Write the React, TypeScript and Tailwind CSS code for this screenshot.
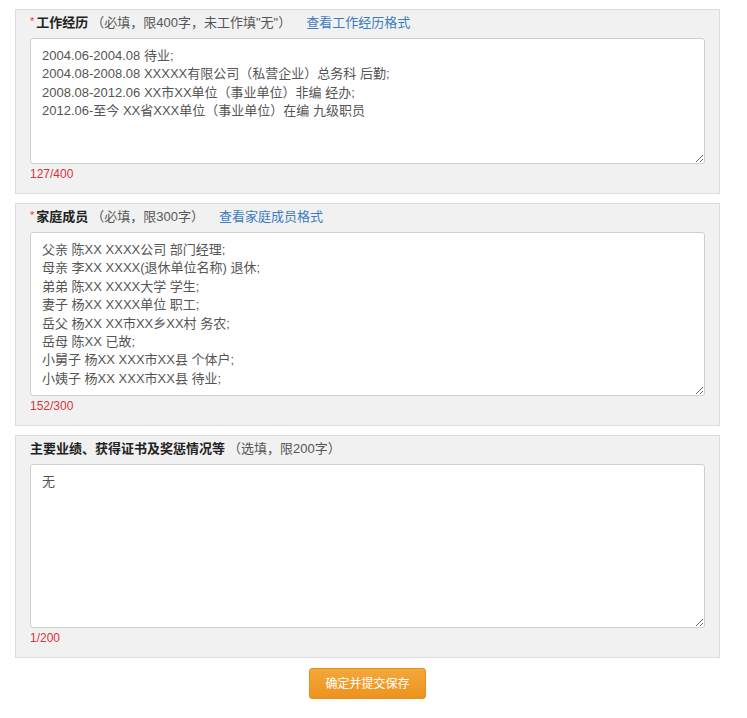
import React from 'react';

const FONT = { fontFamily: '"Liberation Sans", "Noto Sans CJK SC", sans-serif' };

type Section = {
  title: string;
  required: boolean;
  hint: string;
  link?: string;
  value: string;
  count: string;
  height: string;
};

const sections: Section[] = [
  {
    title: '工作经历',
    required: true,
    hint: '（必填，限400字，未工作填"无"）',
    link: '查看工作经历格式',
    value:
      '2004.06-2004.08 待业;\n2004.08-2008.08 XXXXX有限公司（私营企业）总务科 后勤;\n2008.08-2012.06 XX市XX单位（事业单位）非编 经办;\n2012.06-至今 XX省XXX单位（事业单位）在编 九级职员',
    count: '127/400',
    height: 'h-[126px]',
  },
  {
    title: '家庭成员',
    required: true,
    hint: '（必填，限300字）',
    link: '查看家庭成员格式',
    value:
      '父亲 陈XX XXXX公司 部门经理;\n母亲 李XX XXXX(退休单位名称) 退休;\n弟弟 陈XX XXXX大学 学生;\n妻子 杨XX XXXX单位 职工;\n岳父 杨XX XX市XX乡XX村 务农;\n岳母 陈XX 已故;\n小舅子 杨XX XXX市XX县 个体户;\n小姨子 杨XX XXX市XX县 待业;',
    count: '152/300',
    height: 'h-[164px]',
  },
  {
    title: '主要业绩、获得证书及奖惩情况等',
    required: false,
    hint: '（选填，限200字）',
    value: '无',
    count: '1/200',
    height: 'h-[164px]',
  },
];

function FieldPanel({ s }: { s: Section }) {
  return (
    <div className="border border-[#dcdcdc] bg-[#f1f1f1] px-[14px] pt-[3px] pb-[11px]">
      <div className="flex items-center h-[20px] mb-[5px] text-[13px] text-[#555]">
        {s.required && <span className="text-[#e33] text-[11px] mr-[2px] -mt-[4px]">*</span>}
        <span className="font-bold text-[#222]">{s.title}</span>
        <span className="ml-[3px]">{s.hint}</span>
        {s.link && <span className="ml-[15px] text-[#3b7cc0] cursor-pointer">{s.link}</span>}
      </div>
      <textarea
        readOnly
        defaultValue={s.value}
        style={FONT}
        className={`block w-full ${s.height} resize-y overflow-hidden rounded-[3px] border border-[#cfcfcf] bg-white px-[11px] pt-[8px] text-[13px] leading-[18.4px] text-[#555] outline-none`}
      />
      <div className="h-[18px] pt-[1px] text-[12px] leading-[18px] text-[#d8343b]">{s.count}</div>
    </div>
  );
}

export default function App() {
  return (
    <div className="min-h-screen bg-white pl-[15px] pt-[9px]" style={FONT}>
      <div className="w-[705px] flex flex-col gap-[9px]">
        {sections.map((s) => (
          <FieldPanel key={s.title} s={s} />
        ))}
      </div>
      <div className="w-[705px] flex justify-center pt-[10px]">
        <button className="h-[31px] w-[117px] rounded-[3px] border border-[#e5901f] bg-gradient-to-b from-[#f3a83a] to-[#ec931d] text-[12px] text-white">
          确定并提交保存
        </button>
      </div>
    </div>
  );
}
